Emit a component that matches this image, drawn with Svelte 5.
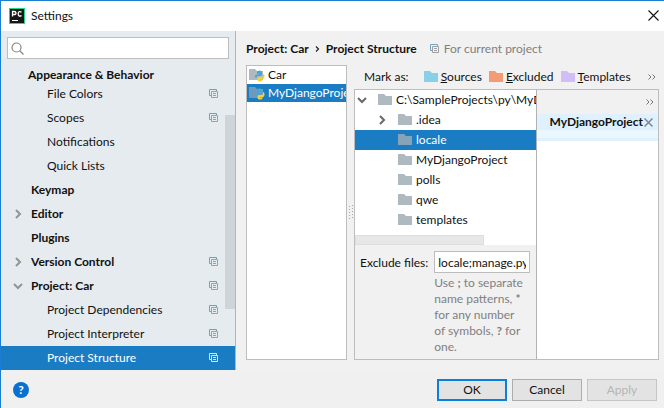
<script>
  const settings = [
    { label: 'File Colors', level: 'child', scoped: true },
    { label: 'Scopes', level: 'child', scoped: true },
    { label: 'Notifications', level: 'child' },
    { label: 'Quick Lists', level: 'child' },
    { label: 'Keymap', level: 'group' },
    { label: 'Editor', level: 'group', arrow: 'right' },
    { label: 'Plugins', level: 'group' },
    { label: 'Version Control', level: 'group', arrow: 'right', scoped: true },
    { label: 'Project: Car', level: 'group', arrow: 'down', scoped: true },
    { label: 'Project Dependencies', level: 'child', scoped: true },
    { label: 'Project Interpreter', level: 'child', scoped: true },
    { label: 'Project Structure', level: 'child', scoped: true }
  ];
  const marks = [
    { label: 'Sources', color: '#87d0e8' },
    { label: 'Excluded', color: '#f29b74' },
    { label: 'Templates', color: '#d1bdf7' }
  ];
  const projects = ['Car', 'MyDjangoProject'];
  const folders = [
    { label: 'C:\\SampleProjects\\py\\MyDjangoProject', arrow: 'down', root: true },
    { label: '.idea', arrow: 'right' },
    { label: 'locale' },
    { label: 'MyDjangoProject' },
    { label: 'polls' },
    { label: 'qwe' },
    { label: 'templates' }
  ];
  let page = $state('Project Structure');
  let project = $state('MyDjangoProject');
  let folder = $state('locale');
  let query = $state('');
  let excluded = $state('locale;manage.py');
</script>

{#snippet arrow(dir)}
  <svg class="arrow" width="10" height="10" viewBox="0 0 10 10" aria-hidden="true">
    {#if dir === 'right'}<path d="M3 1l4 4-4 4" />{:else if dir === 'down'}<path d="M1 3l4 4 4-4" />{/if}
  </svg>
{/snippet}

{#snippet copies()}
  <svg class="copies" width="10" height="10" viewBox="0 0 10 10" aria-hidden="true">
    <path class="back" d="M2 6.500H.5v-6h7V2" />
    <path class="front" d="M2.500 2.500h6v6h-6zM4 4.500h3M4 6.500h3" />
  </svg>
{/snippet}

{#snippet folderIcon(color)}
  <svg class="folder" width="14" height="12" viewBox="0 0 14 12" aria-hidden="true">
    <path d="M0 0h6l2 2h6v9H0z" fill={color} />
  </svg>
{/snippet}

<main class="window">
  <header class="title">
    <svg width="16" height="16" viewBox="0 0 16 16" aria-hidden="true">
      <path d="M0 0h16v16H0z" fill="#21d789" />
      <path d="M1 1h14v14H1z" fill="#161616" />
      <path d="M3.500 8.500V3.500h1.500q2 0 2 1.500T5 6.500H3.500M12.500 4.200Q9.200 2.500 9.200 5.800T12.500 7.600" fill="none" stroke="#fff" stroke-width="1.300" />
      <path d="M3 12h6v1H3z" fill="#fff" />
    </svg>
    <h1>Settings</h1>
    <button class="close" aria-label="Close">
      <svg width="11" height="11" viewBox="0 0 11 11"><path d="M.5.5l10 10M10.500.5l-10 10" fill="none" stroke="#111" stroke-width="1.100" /></svg>
    </button>
  </header>

  <div class="body">
    <nav class="sidebar" aria-label="Settings pages">
      <label class="search">
        <svg width="13" height="13" viewBox="0 0 13 13" aria-hidden="true">
          <path d="M9 9l3.500 3.500M10 5.500a4.500 4.500 0 1 1-9 0a4.500 4.500 0 0 1 9 0z" fill="none" stroke="#858585" stroke-width="1.200" />
        </svg>
        <input type="search" aria-label="Search settings" bind:value={query} />
      </label>
      <h2>Appearance &amp; Behavior</h2>
      <div class="pages">
        {#each settings as item}
          <button class="page {item.level}" class:selected={page === item.label} onclick={() => (page = item.label)}>
            {@render arrow(item.arrow)}
            <span>{item.label}</span>
            {#if item.scoped}{@render copies()}{/if}
          </button>
        {/each}
        <div class="scroll"></div>
      </div>
    </nav>

    <section class="content">
      <div class="crumbs">
        <b>Project: Car</b>
        <svg width="5" height="8" viewBox="0 0 5 8" aria-hidden="true"><path d="M1 1.500L3.500 4 1 6.500" fill="none" stroke="#222" stroke-width="1.200" /></svg>
        <b>Project Structure</b>
        <span class="scope">{@render copies()}For current project</span>
      </div>

      <div class="split">
        <div class="projects">
          {#each projects as name}
            <button class:selected={project === name} onclick={() => (project = name)}>
              <svg width="16" height="14" viewBox="0 0 16 14" aria-hidden="true">
                <path d="M0 1h6l2 2h6v9H0z" fill="#aeb9c0" class="tint" />
                <path d="M6 8q0-1.500 1.500-1.500H10V6H8V4q0-1.500 2.500-1.500T13 4v2.500Q13 8 11.500 8H9q-1.500 0-1.500 2H7q-1 0-1-2z" fill="#45a9d8" />
                <path d="M15.500 8q0-2-1.500-2v1.500Q14 9 12.500 9H10q-1.500 0-1.500 1.500V12q0 1.500 2.500 1.500t2.500-1.500v-.5H11V11h3q1.500 0 1.500-3z" fill="#f2cf3d" />
              </svg>
              <span>{name}</span>
            </button>
          {/each}
        </div>

        <div class="grip" aria-hidden="true">
          <svg width="5" height="15" viewBox="0 0 5 15"><path d="M1.500 1v14M4.500 0v14" stroke="#a8a8a8" stroke-dasharray="1 2" /></svg>
        </div>

        <div class="editor">
          <div class="marks">
            <span class="lead">Mark as:</span>
            {#each marks as mark}
              <button>{@render folderIcon(mark.color)}<span><u>{mark.label[0]}</u>{mark.label.slice(1)}</span></button>
            {/each}
            <button class="more" aria-label="More marks">
              <svg width="8" height="6" viewBox="0 0 8 6"><path d="M.5.5L3 3 .5 5.500M4.500.5L7 3 4.500 5.500" /></svg>
            </button>
          </div>

          <div class="panes">
            <div class="files">
              <div class="tree">
                {#each folders as item}
                  <button class:root={item.root} class:selected={folder === item.label} onclick={() => (folder = item.label)}>
                    {@render arrow(item.arrow)}
                    {@render folderIcon(folder === item.label ? '#86a3b8' : '#aeb9c0')}
                    <span>{item.label}</span>
                  </button>
                {/each}
                <div class="hscroll"></div>
              </div>
              <div class="exclude">
                <label for="exclude">Exclude files:</label>
                <div class="field">
                  <input id="exclude" type="text" bind:value={excluded} />
                  <p>Use <b>;</b> to separate name patterns, <b>*</b> for any number of symbols, <b>?</b> for one.</p>
                </div>
              </div>
            </div>

            <div class="roots">
              <div class="rootbar">
                <button class="more" aria-label="More roots">
                  <svg width="8" height="6" viewBox="0 0 8 6"><path d="M.5.5L3 3 .5 5.500M4.500.5L7 3 4.500 5.500" /></svg>
                </button>
              </div>
              <div class="rootname">
                <b>MyDjangoProject</b>
                <button aria-label="Remove root">
                  <svg width="9" height="9" viewBox="0 0 9 9"><path d="M.5.5l8 8M8.500.5l-8 8" fill="none" stroke="#7d878e" stroke-width="1.500" /></svg>
                </button>
              </div>
              <div class="rootbody"></div>
            </div>
          </div>
        </div>
      </div>
    </section>
  </div>

  <footer>
    <button class="help" aria-label="Help">?</button>
    <button class="action primary">OK</button>
    <button class="action">Cancel</button>
    <button class="action" disabled>Apply</button>
  </footer>
</main>

<style>
  :global(body) { margin: 0; }
  .window, .window :is(button, input) { font-family: Lato, "Open Sans", sans-serif; font-size: 12px; line-height: 16px; color: #111; }
  .window, .window * { box-sizing: border-box; }
  .window { min-height: 100vh; display: flex; flex-direction: column; background: #f1f1f1; border: solid #1a7fd4; border-width: 1px 0 0 1px; }
  .window button { border: 0; padding: 0; background: none; text-align: left; white-space: nowrap; }
  svg { display: block; flex: none; }
  h1, h2, p { margin: 0; font-size: 12px; }

  .title { height: 30px; display: flex; align-items: center; gap: 6px; padding: 0 5px 1px 8px; background: #fff; }
  h1 { flex: 1; font-weight: 400; }

  .body { flex: 1; display: flex; }
  .sidebar { flex: none; width: 235px; background: #e6ebef; border-right: 1px solid #b2b5b7; }
  .search { display: flex; align-items: center; height: 22px; margin: 6px 6px 0; padding-left: 3px; background: #fff; border: 1px solid #bdbdbd; }
  .search input { flex: 1; min-width: 0; border: 0; outline: 0; background: none; }
  h2 { padding: 8px 0 0 27px; line-height: 15px; font-weight: 700; }
  .pages { position: relative; }
  .page { width: 100%; height: 24px; display: flex; align-items: center; }
  .window .page { padding: 0 16px 0 12px; }
  .page span { flex: 1; margin-left: 8px; }
  .child span { margin-left: 24px; }
  .group span { font-weight: 700; }
  .arrow { fill: none; stroke: #929597; stroke-width: 2; }
  .copies { fill: none; }
  .back { stroke: #6fa3bf; }
  .front { stroke: #9da1a4; }
  .window .selected { background: #1a7dc4; color: #fff; }
  .selected .back, .selected .front { stroke: #d5e6f3; }
  .scroll { position: absolute; right: 0; top: 33px; width: 10px; height: 194px; background: #cfd4d8; }

  .content { flex: 1; min-width: 0; display: flex; flex-direction: column; padding: 10px 5px 10px 10px; }
  .crumbs { display: flex; align-items: center; gap: 6px; height: 16px; white-space: nowrap; }
  .scope { display: flex; align-items: center; gap: 4px; margin-left: 7px; color: #808080; }
  .split { flex: 1; display: flex; min-width: 0; margin-top: 8px; }
  .projects { flex: none; width: 101px; overflow: hidden; background: #fff; border: 1px solid #bdbdbd; }
  .projects button { width: 100%; height: 18px; display: flex; align-items: center; gap: 3px; overflow: hidden; }
  .window .projects button { padding-left: 2px; }
  .projects .selected .tint { fill: #6d9abc; }
  .grip { flex: none; width: 7px; display: flex; align-items: center; justify-content: center; }

  .editor { flex: 1; min-width: 0; display: flex; flex-direction: column; }
  .marks { display: flex; align-items: center; gap: 7px; height: 24px; padding: 0 3px 0 10px; }
  .marks button { display: flex; align-items: center; gap: 3px; }
  .lead { margin-right: 8px; white-space: nowrap; }
  .window .marks .more { margin-left: auto; }
  .more path { fill: none; stroke: #777; }
  .panes { flex: 1; display: flex; min-width: 0; border: 1px solid #bdbdbd; }
  .files { flex: 3; min-width: 0; display: flex; flex-direction: column; }
  .tree { overflow: hidden; background: #fff; }
  .tree button { width: 100%; height: 20px; display: flex; align-items: center; overflow: hidden; }
  .window .tree button { padding-left: 22px; }
  .window .tree .root { padding-left: 2px; }
  .tree .arrow { margin-right: 11px; stroke: #686868; }
  .tree span { margin-left: 4px; }
  .hscroll { width: 71%; height: 10px; margin-top: 5px; background: #e7e7e7; border: 1px solid #dedede; }
  .exclude { flex: 1; display: flex; gap: 6px; padding: 6px 6px 0 5px; }
  .exclude label { padding-top: 4px; white-space: nowrap; }
  .field { flex: 1; min-width: 0; }
  .window .field input { width: 100%; height: 22px; display: block; padding: 0 3px; background: #fff; border: 1px solid #bdbdbd; border-radius: 0; outline: 0; }
  .field p { margin-top: 2px; padding-right: 6px; color: #808080; }
  .roots { flex: 2; min-width: 122px; max-width: 40%; display: flex; flex-direction: column; background: #fff; border-left: 1px solid #b2b2b2; }
  .rootbar { height: 24px; display: flex; align-items: center; justify-content: flex-end; padding-right: 4px; background: #f1f1f1; }
  .rootname { height: 16px; display: flex; align-items: center; justify-content: flex-end; gap: 1px; padding-right: 5px; background: #dff1ff; }
  .rootbody { height: 11px; background: #ebf7ff; border-bottom: 3px solid #dff1ff; }

  footer { height: 38px; display: flex; align-items: center; gap: 5px; padding: 2px 7px 0 12px; background: #f0f0f0; }
  .window .help { width: 16px; height: 16px; margin-right: auto; border-radius: 50%; background: #0a6fd0; color: #fff; text-align: center; font-weight: 700; }
  .window .action { width: 70px; height: 22px; text-align: center; line-height: 18px; background: #e3e3e3; border: 1px solid #adadad; }
  .window .primary { border: 2px solid #0a80dc; }
  .window .action:disabled { color: #b5b5b5; border-color: #c5c5c5; }
</style>
